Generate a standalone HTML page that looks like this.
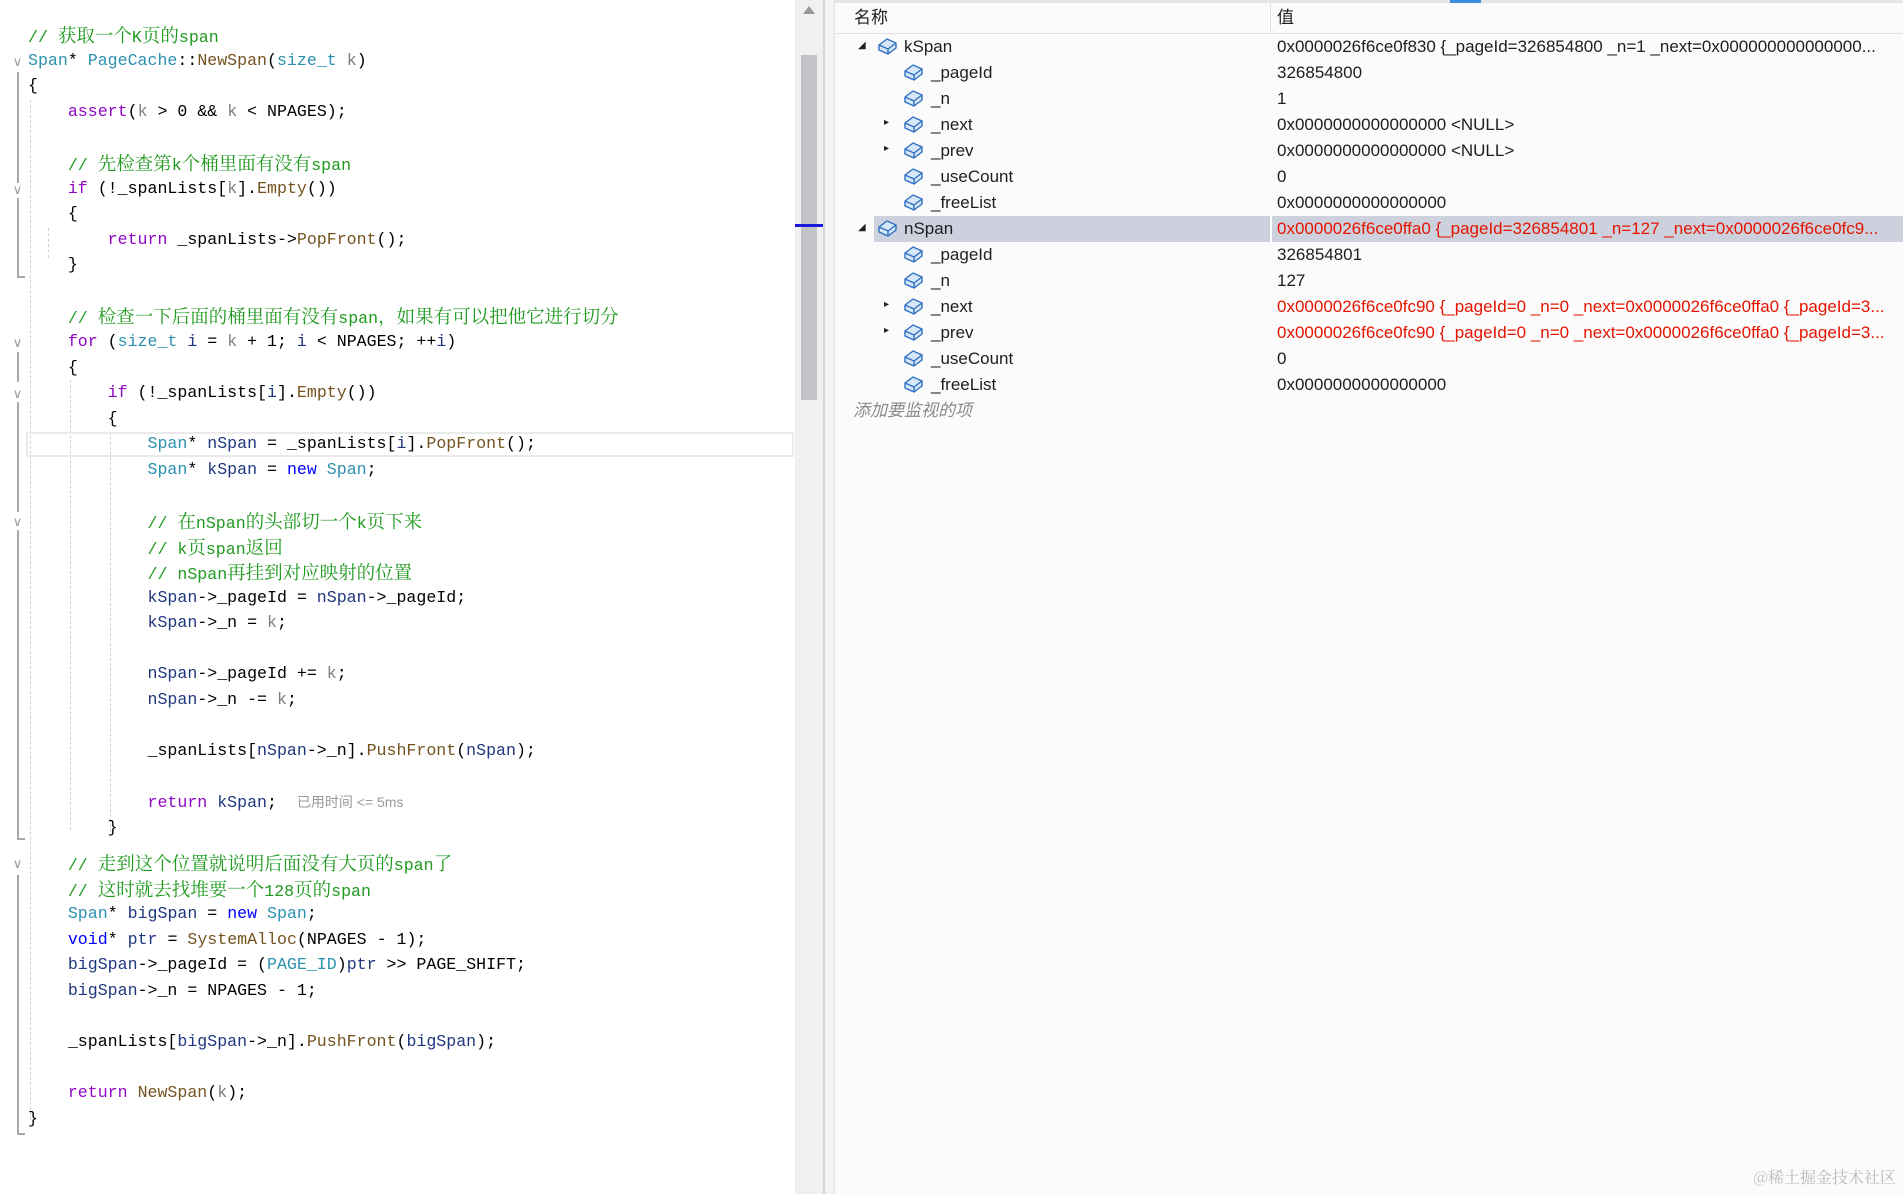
<!DOCTYPE html>
<html><head><meta charset="utf-8"><style>
*{margin:0;padding:0;box-sizing:border-box}
body{width:1903px;height:1194px;overflow:hidden;background:#fff;position:relative;font-family:"Liberation Mono","Noto Serif CJK SC",monospace}
.l{position:absolute;left:28px;height:26px;line-height:26px;font-size:16.6px;white-space:pre;color:#000}
.l i{font-style:normal;font-family:"Noto Serif CJK SC","Noto Sans CJK SC",serif;font-size:18.5px}
.cm{color:#1f9a1f}.kw{color:#8f08c4}.ty{color:#2b91af}.fn{color:#74531f}.pa{color:#808080}.lo{color:#1f377f}.bl{color:#0000ff}
.g{position:absolute;background:#a8a8a8}
.dg{position:absolute;width:0;border-left:1px dashed #d0d0d0}
.chev{position:absolute;left:11px;width:13px;height:13px;background:#fff;color:#999;font:13px "Liberation Sans",sans-serif;line-height:13px;text-align:center}
.w{position:absolute;font-family:"Liberation Sans","Noto Sans CJK SC",sans-serif;font-size:17px;height:26px;line-height:26px;white-space:nowrap;color:#1e1e1e}
.red{color:#e51400}
.ic{position:absolute;width:22px;height:20px}
.ar{position:absolute;font:10px "DejaVu Sans",sans-serif;color:#222}
</style></head><body>

<div class="g" style="left:17px;top:72px;width:2px;height:118px"></div>
<div class="g" style="left:17px;top:198px;width:2px;height:80px"></div>
<div class="g" style="left:17px;top:276px;width:8px;height:2px"></div>
<div class="g" style="left:17px;top:352px;width:2px;height:30px"></div>
<div class="g" style="left:17px;top:402px;width:2px;height:110px"></div>
<div class="g" style="left:17px;top:530px;width:2px;height:310px"></div>
<div class="g" style="left:17px;top:838px;width:8px;height:2px"></div>
<div class="g" style="left:17px;top:875px;width:2px;height:260px"></div>
<div class="g" style="left:17px;top:1133px;width:8px;height:2px"></div>
<div class="chev" style="top:55px">&#8744;</div>
<div class="chev" style="top:183px">&#8744;</div>
<div class="chev" style="top:336px">&#8744;</div>
<div class="chev" style="top:387px">&#8744;</div>
<div class="chev" style="top:515px">&#8744;</div>
<div class="chev" style="top:857px">&#8744;</div>
<div class="dg" style="left:30px;top:100px;height:1020px"></div>
<div class="dg" style="left:48px;top:228px;height:30px"></div>
<div class="dg" style="left:70px;top:380px;height:450px"></div>
<div class="dg" style="left:110px;top:432px;height:400px"></div>

<div style="position:absolute;left:26px;top:432px;width:768px;height:25px;border:2px solid #eaeaea"></div>

<div class="l cm" style="top:22px">// <i>获取一个</i>K<i>页的</i>span</div>
<div class="l" style="top:48px"><span class="ty">Span</span>* <span class="ty">PageCache</span>::<span class="fn">NewSpan</span>(<span class="ty">size_t</span> <span class="pa">k</span>)</div>
<div class="l" style="top:73px">{</div>
<div class="l" style="top:99px">    <span class="kw">assert</span>(<span class="pa">k</span> &gt; 0 &amp;&amp; <span class="pa">k</span> &lt; NPAGES);</div>
<div class="l cm" style="top:150px">    // <i>先检查第</i>k<i>个桶里面有没有</i>span</div>
<div class="l" style="top:176px">    <span class="kw">if</span> (!_spanLists[<span class="pa">k</span>].<span class="fn">Empty</span>())</div>
<div class="l" style="top:201px">    {</div>
<div class="l" style="top:227px">        <span class="kw">return</span> _spanLists-&gt;<span class="fn">PopFront</span>();</div>
<div class="l" style="top:252px">    }</div>
<div class="l cm" style="top:303px">    // <i>检查一下后面的桶里面有没有</i>span<i>，如果有可以把他它进行切分</i></div>
<div class="l" style="top:329px">    <span class="kw">for</span> (<span class="ty">size_t</span> <span class="lo">i</span> = <span class="pa">k</span> + 1; <span class="lo">i</span> &lt; NPAGES; ++<span class="lo">i</span>)</div>
<div class="l" style="top:355px">    {</div>
<div class="l" style="top:380px">        <span class="kw">if</span> (!_spanLists[<span class="lo">i</span>].<span class="fn">Empty</span>())</div>
<div class="l" style="top:406px">        {</div>
<div class="l" style="top:431px">            <span class="ty">Span</span>* <span class="lo">nSpan</span> = _spanLists[<span class="lo">i</span>].<span class="fn">PopFront</span>();</div>
<div class="l" style="top:457px">            <span class="ty">Span</span>* <span class="lo">kSpan</span> = <span class="bl">new</span> <span class="ty">Span</span>;</div>
<div class="l cm" style="top:508px">            // <i>在</i>nSpan<i>的头部切一个</i>k<i>页下来</i></div>
<div class="l cm" style="top:534px">            // k<i>页</i>span<i>返回</i></div>
<div class="l cm" style="top:559px">            // nSpan<i>再挂到对应映射的位置</i></div>
<div class="l" style="top:585px">            <span class="lo">kSpan</span>-&gt;_pageId = <span class="lo">nSpan</span>-&gt;_pageId;</div>
<div class="l" style="top:610px">            <span class="lo">kSpan</span>-&gt;_n = <span class="pa">k</span>;</div>
<div class="l" style="top:661px">            <span class="lo">nSpan</span>-&gt;_pageId += <span class="pa">k</span>;</div>
<div class="l" style="top:687px">            <span class="lo">nSpan</span>-&gt;_n -= <span class="pa">k</span>;</div>
<div class="l" style="top:738px">            _spanLists[<span class="lo">nSpan</span>-&gt;_n].<span class="fn">PushFront</span>(<span class="lo">nSpan</span>);</div>
<div class="l" style="top:789px">            <span class="kw">return</span> <span class="lo">kSpan</span>;  <span style="font-family:'Liberation Sans','Noto Sans CJK SC',sans-serif;font-size:14px;color:#999">已用时间 &lt;= 5ms</span></div>
<div class="l" style="top:815px">        }</div>
<div class="l cm" style="top:850px">    // <i>走到这个位置就说明后面没有大页的</i>span<i>了</i></div>
<div class="l cm" style="top:876px">    // <i>这时就去找堆要一个</i>128<i>页的</i>span</div>
<div class="l" style="top:901px">    <span class="ty">Span</span>* <span class="lo">bigSpan</span> = <span class="bl">new</span> <span class="ty">Span</span>;</div>
<div class="l" style="top:927px">    <span class="bl">void</span>* <span class="lo">ptr</span> = <span class="fn">SystemAlloc</span>(NPAGES - 1);</div>
<div class="l" style="top:952px">    <span class="lo">bigSpan</span>-&gt;_pageId = (<span class="ty">PAGE_ID</span>)<span class="lo">ptr</span> &gt;&gt; PAGE_SHIFT;</div>
<div class="l" style="top:978px">    <span class="lo">bigSpan</span>-&gt;_n = NPAGES - 1;</div>
<div class="l" style="top:1029px">    _spanLists[<span class="lo">bigSpan</span>-&gt;_n].<span class="fn">PushFront</span>(<span class="lo">bigSpan</span>);</div>
<div class="l" style="top:1080px">    <span class="kw">return</span> <span class="fn">NewSpan</span>(<span class="pa">k</span>);</div>
<div class="l" style="top:1106px">}</div>

<div style="position:absolute;left:795px;top:0;width:28px;height:1194px;background:#f0f0f0"></div>
<div style="position:absolute;left:803px;top:6px;width:0;height:0;border-left:6px solid transparent;border-right:6px solid transparent;border-bottom:8px solid #999"></div>
<div style="position:absolute;left:801px;top:55px;width:16px;height:345px;background:#c2c3c7"></div>
<div style="position:absolute;left:795px;top:224px;width:28px;height:3px;background:#1a1adb"></div>
<div style="position:absolute;left:823px;top:0;width:12px;height:1194px;background:#f3f3f3;border-left:2px solid #d6d6d6;border-right:1px solid #e3e3e3"></div>

<div style="position:absolute;left:835px;top:0;width:1068px;height:1194px;background:#fbfbfb"></div>
<div style="position:absolute;left:835px;top:0;width:1068px;height:3px;background:#e6e6e6"></div>
<div style="position:absolute;left:1450px;top:0;width:31px;height:3px;background:#3b8de0"></div>
<div style="position:absolute;left:835px;top:33px;width:1068px;height:1px;background:#e2e2e2"></div>
<div style="position:absolute;left:1270px;top:3px;width:1px;height:31px;background:#e2e2e2"></div>
<div class="w" style="left:854px;top:5px">名称</div>
<div class="w" style="left:1277px;top:5px">值</div>

<div style="position:absolute;left:874px;top:216px;width:1029px;height:26px;background:#cdd1dd"></div>
<div style="position:absolute;left:1270px;top:216px;width:2px;height:26px;background:#fff"></div>

<svg width="0" height="0" style="position:absolute"><defs><g id="cb"><path d="M2 9 L10 3 L19 7 L19 12 L11 18 L2 14 Z" fill="#d6e8f8" stroke="#2f6fc0" stroke-width="1.4" stroke-linejoin="round"/><path d="M2 9 L11 13 L19 7 M11 13 L11 18" fill="none" stroke="#2f6fc0" stroke-width="1.4"/></g></defs></svg>

<div class="ar" style="left:858px;top:40px">&#9698;</div>
<svg class="ic" style="left:877px;top:36px"><use href="#cb"/></svg>
<div class="w" style="left:904px;top:34px">kSpan</div>
<div class="w" style="left:1277px;top:34px">0x0000026f6ce0f830 {_pageId=326854800 _n=1 _next=0x000000000000000...</div>

<svg class="ic" style="left:903px;top:62px"><use href="#cb"/></svg>
<div class="w" style="left:931px;top:60px">_pageId</div><div class="w" style="left:1277px;top:60px">326854800</div>
<svg class="ic" style="left:903px;top:88px"><use href="#cb"/></svg>
<div class="w" style="left:931px;top:86px">_n</div><div class="w" style="left:1277px;top:86px">1</div>
<div class="ar" style="left:884px;top:117px">&#9656;</div>
<svg class="ic" style="left:903px;top:114px"><use href="#cb"/></svg>
<div class="w" style="left:931px;top:112px">_next</div><div class="w" style="left:1277px;top:112px">0x0000000000000000 &lt;NULL&gt;</div>
<div class="ar" style="left:884px;top:143px">&#9656;</div>
<svg class="ic" style="left:903px;top:140px"><use href="#cb"/></svg>
<div class="w" style="left:931px;top:138px">_prev</div><div class="w" style="left:1277px;top:138px">0x0000000000000000 &lt;NULL&gt;</div>
<svg class="ic" style="left:903px;top:166px"><use href="#cb"/></svg>
<div class="w" style="left:931px;top:164px">_useCount</div><div class="w" style="left:1277px;top:164px">0</div>
<svg class="ic" style="left:903px;top:192px"><use href="#cb"/></svg>
<div class="w" style="left:931px;top:190px">_freeList</div><div class="w" style="left:1277px;top:190px">0x0000000000000000</div>

<div class="ar" style="left:858px;top:222px">&#9698;</div>
<svg class="ic" style="left:877px;top:218px"><use href="#cb"/></svg>
<div class="w" style="left:904px;top:216px">nSpan</div>
<div class="w red" style="left:1277px;top:216px">0x0000026f6ce0ffa0 {_pageId=326854801 _n=127 _next=0x0000026f6ce0fc9...</div>

<svg class="ic" style="left:903px;top:244px"><use href="#cb"/></svg>
<div class="w" style="left:931px;top:242px">_pageId</div><div class="w" style="left:1277px;top:242px">326854801</div>
<svg class="ic" style="left:903px;top:270px"><use href="#cb"/></svg>
<div class="w" style="left:931px;top:268px">_n</div><div class="w" style="left:1277px;top:268px">127</div>
<div class="ar" style="left:884px;top:299px">&#9656;</div>
<svg class="ic" style="left:903px;top:296px"><use href="#cb"/></svg>
<div class="w" style="left:931px;top:294px">_next</div><div class="w red" style="left:1277px;top:294px">0x0000026f6ce0fc90 {_pageId=0 _n=0 _next=0x0000026f6ce0ffa0 {_pageId=3...</div>
<div class="ar" style="left:884px;top:325px">&#9656;</div>
<svg class="ic" style="left:903px;top:322px"><use href="#cb"/></svg>
<div class="w" style="left:931px;top:320px">_prev</div><div class="w red" style="left:1277px;top:320px">0x0000026f6ce0fc90 {_pageId=0 _n=0 _next=0x0000026f6ce0ffa0 {_pageId=3...</div>
<svg class="ic" style="left:903px;top:348px"><use href="#cb"/></svg>
<div class="w" style="left:931px;top:346px">_useCount</div><div class="w" style="left:1277px;top:346px">0</div>
<svg class="ic" style="left:903px;top:374px"><use href="#cb"/></svg>
<div class="w" style="left:931px;top:372px">_freeList</div><div class="w" style="left:1277px;top:372px">0x0000000000000000</div>

<div class="w" style="left:853px;top:398px;color:#8a8a8a;font-style:italic">添加要监视的项</div>

<div style="position:absolute;left:1736px;top:1165px;width:160px;text-align:right;font:16px 'Noto Serif CJK SC','Liberation Serif',serif;color:#b8b8b8;white-space:nowrap">@稀土掘金技术社区</div>
</body></html>
